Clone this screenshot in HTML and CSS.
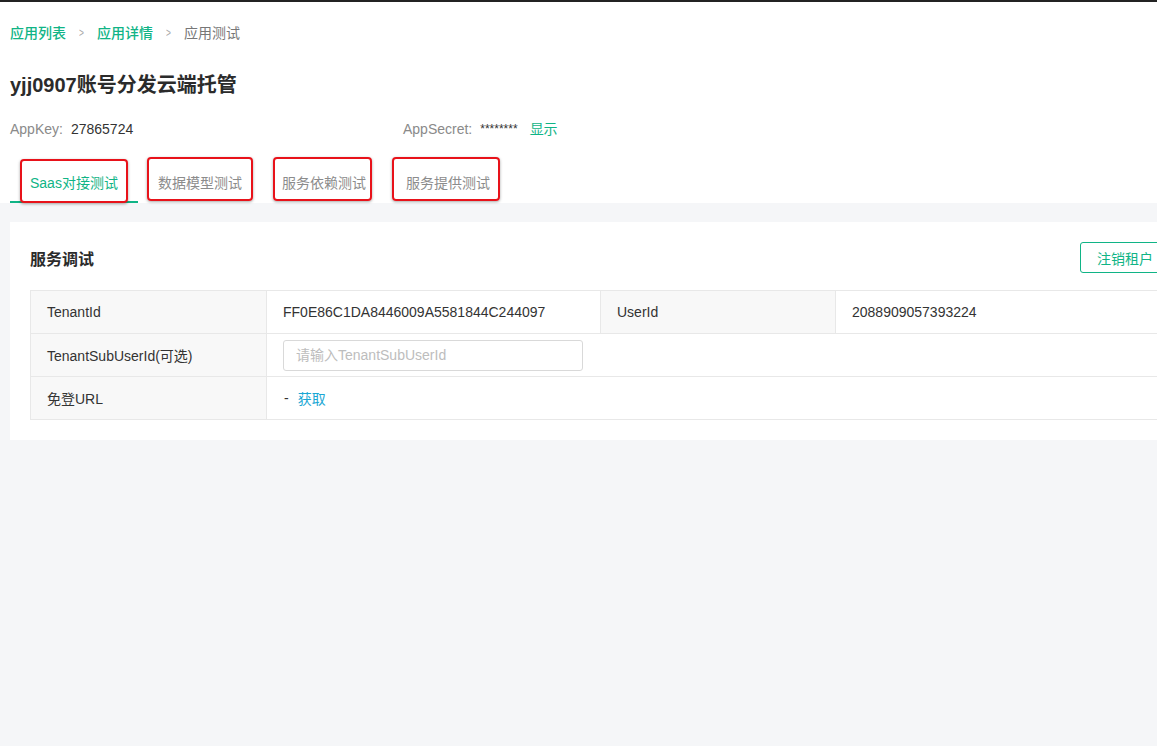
FILE: index.html
```html
<!DOCTYPE html>
<html lang="zh-CN">
<head>
<meta charset="utf-8">
<title>应用测试</title>
<link rel="stylesheet" href="styles.css">
</head>
<body>
<div class="topbar"></div>
<div class="page">
  <div class="head">
    <nav class="crumbs">
      <a class="crumb-link">应用列表</a>
      <span class="sep">&gt;</span>
      <a class="crumb-link">应用详情</a>
      <span class="sep">&gt;</span>
      <span class="crumb-cur">应用测试</span>
    </nav>
    <h1 class="title">yjj0907账号分发云端托管</h1>
    <div class="keys">
      <div class="key-item key-first"><span class="key-label">AppKey:</span><span class="key-val">27865724</span></div>
      <div class="key-item"><span class="key-label">AppSecret:</span><span class="key-val stars">********</span><a class="show">显示</a></div>
    </div>
    <div class="tabs">
      <div class="tab active">Saas对接测试<span class="mark mark-1"></span></div>
      <div class="tab">数据模型测试<span class="mark mark-2"></span></div>
      <div class="tab">服务依赖测试<span class="mark mark-3"></span></div>
      <div class="tab">服务提供测试<span class="mark mark-4"></span></div>
    </div>
  </div>
  <div class="body">
    <section class="card">
      <div class="card-head">
        <h2 class="card-title">服务调试</h2>
        <button class="btn-outline">注销租户</button>
      </div>
      <div class="table">
        <div class="row">
          <div class="cell label">TenantId</div>
          <div class="cell value">FF0E86C1DA8446009A5581844C244097</div>
          <div class="cell label">UserId</div>
          <div class="cell value">2088909057393224</div>
        </div>
        <div class="row">
          <div class="cell label">TenantSubUserId(可选)</div>
          <div class="cell value wide"><input class="input" placeholder="请输入TenantSubUserId"></div>
        </div>
        <div class="row last">
          <div class="cell label">免登URL</div>
          <div class="cell value wide"><span class="dash">-</span><a class="fetch">获取</a></div>
        </div>
      </div>
    </section>
  </div>
</div>
</body>
</html>
```

FILE: styles.css
```css
* { box-sizing: border-box; }
html, body {
  margin: 0;
  padding: 0;
  background: #f5f6f8;
  overflow: hidden;
  width: 1157px;
  height: 746px;
}
body {
  font-family: "Liberation Sans", "Noto Sans CJK SC", sans-serif;
  font-size: 14px;
  color: #333;
}
.topbar {
  height: 2px;
  background: #232323;
}
.page {
  width: 1202px;
}
.head {
  background: #fff;
  padding: 21px 10px 0;
}
.crumbs {
  display: flex;
  align-items: center;
  height: 20px;
  line-height: 20px;
  font-size: 14px;
}
.crumb-link { color: #10b486; font-weight: 500; }
.crumb-cur { color: #777; }
.sep {
  color: #aaa;
  font-size: 12px;
  margin: 0 12px;
  transform: scaleX(0.7);
}
.title {
  margin: 28px 0 0;
  font-size: 20px;
  line-height: 28px;
  font-weight: 600;
  color: #2b2b2b;
}
.keys {
  display: flex;
  margin-top: 20px;
  height: 20px;
  line-height: 20px;
  font-size: 14px;
}
.key-item { display: flex; }
.key-first { width: 393px; }
.key-label { color: #8a8a8a; margin-right: 8px; }
.key-val { color: #333; }
.stars { font-size: 12px; margin-right: 12px; }
.show { color: #10b486; }
.tabs {
  display: flex;
  margin-top: 22px;
}
.tab {
  position: relative;
  padding: 12px 20px 8px;
  line-height: 20px;
  color: #8c8c8c;
  border-bottom: 2px solid transparent;
}
.tab.active {
  color: #10b486;
  border-bottom-color: #10b486;
}
.mark {
  position: absolute;
  top: -4px;
  height: 44px;
  border: 2px solid #e8121a;
  border-radius: 4px;
  box-shadow: 0 1px 3px rgba(0, 0, 0, 0.35);
}
.mark-1 { left: 10px; right: 10px; top: -2px; }
.mark-2 { left: 9px; right: 9px; }
.mark-3 { left: 11px; right: 14px; }
.mark-4 { left: 6px; right: 10px; }
.body {
  padding: 19px 12px 0 10px;
}
.card {
  background: #fff;
  padding: 20px 20px 20px;
}
.card-head {
  display: flex;
  justify-content: space-between;
  align-items: center;
  height: 31px;
}
.card-title {
  margin: 0;
  font-size: 16px;
  font-weight: 600;
  color: #2b2b2b;
}
.btn-outline {
  height: 31px;
  padding: 0 16px;
  background: #fff;
  border: 1px solid #10b486;
  border-radius: 3px;
  color: #10b486;
  font-family: inherit;
  font-size: 14px;
}
.table {
  margin-top: 17px;
  border: 1px solid #e8e8e8;
  border-bottom: 0;
}
.row {
  display: grid;
  grid-template-columns: 236px 333px 236px 1fr;
  height: 43px;
  border-bottom: 1px solid #e8e8e8;
}
.cell {
  display: flex;
  align-items: center;
  padding: 0 16px;
  font-size: 14px;
  color: #333;
}
.label {
  background: #f8f8f8;
  border-right: 1px solid #e8e8e8;
}
.value + .label { border-left: 1px solid #e8e8e8; }
.value.wide { grid-column: 2 / 5; }
.input {
  width: 300px;
  height: 31px;
  border: 1px solid #d9d9d9;
  border-radius: 3px;
  padding: 0 12px;
  font-family: inherit;
  font-size: 14px;
  color: #333;
  outline: none;
}
.input::placeholder { color: #bdbdbd; }
.dash { margin-right: 9px; margin-left: 1px; }
.fetch { color: #1ba7d4; }
```
